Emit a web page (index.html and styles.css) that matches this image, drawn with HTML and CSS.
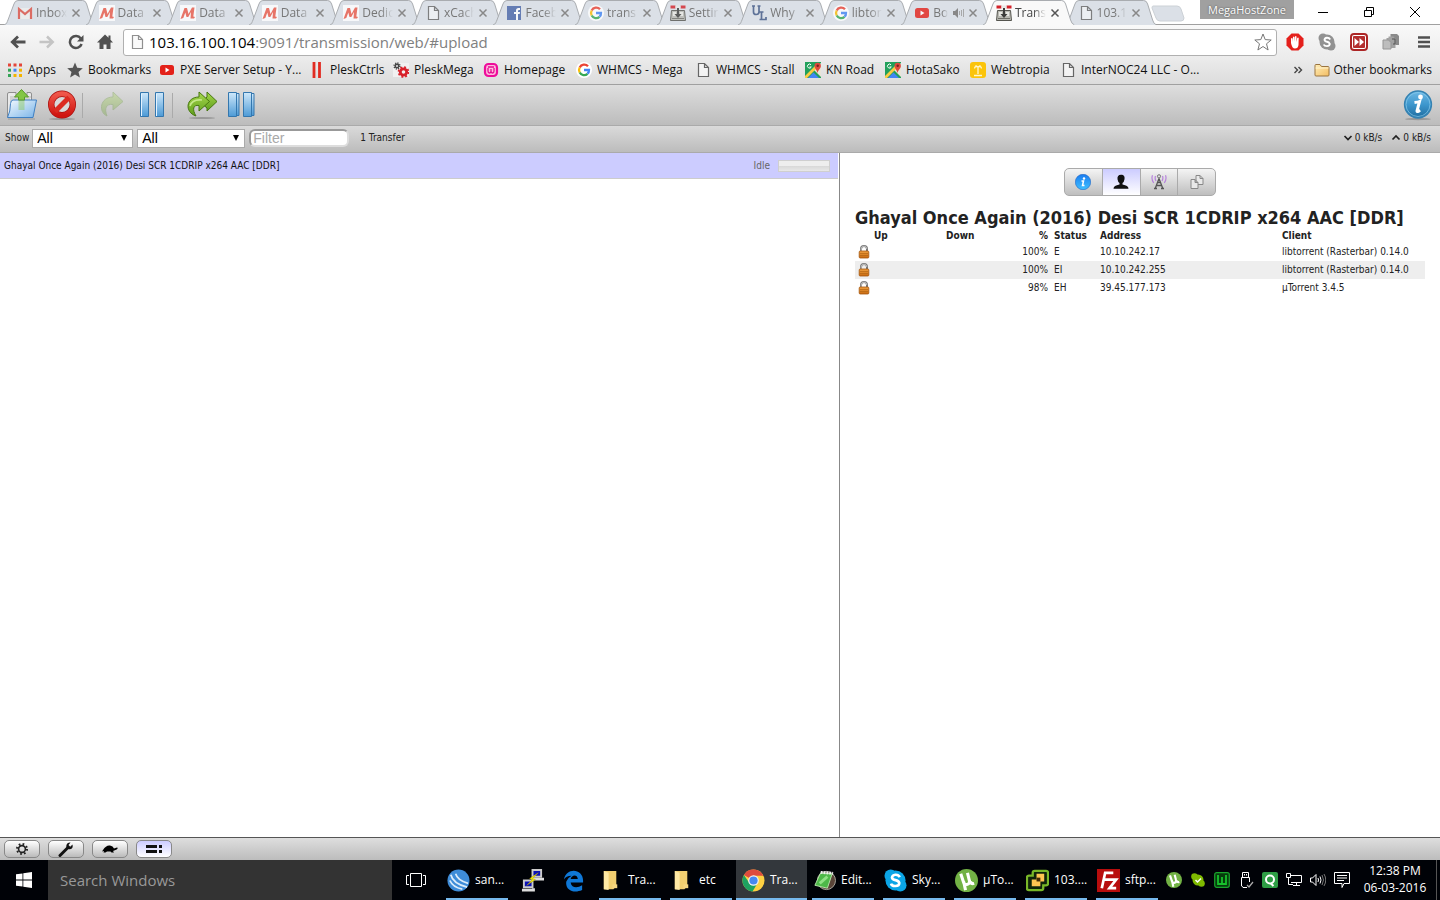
FILE: index.html
```html
<!DOCTYPE html>
<html lang="en">
<head>
<meta charset="utf-8">
<title>Transmission Web Interface</title>
<link rel="stylesheet" href="styles.css">
</head>
<body>
<svg class="sprite" aria-hidden="true">
  <defs>
    <linearGradient id="g-blue" x1="0" y1="0" x2="0" y2="1"><stop offset="0" stop-color="#cfe8fa"/><stop offset="1" stop-color="#4c9ad6"/></linearGradient>
    <linearGradient id="g-folder" x1="0" y1="0" x2="1" y2="1"><stop offset="0" stop-color="#f4faff"/><stop offset="1" stop-color="#7ab4e8"/></linearGradient>
    <linearGradient id="g-green" x1="0" y1="0" x2="0" y2="1"><stop offset="0" stop-color="#a6d84c"/><stop offset="1" stop-color="#5f9e1c"/></linearGradient>
    <linearGradient id="g-info" x1="0" y1="0" x2="0" y2="1"><stop offset="0" stop-color="#6db8e4"/><stop offset=".5" stop-color="#3d97cd"/><stop offset="1" stop-color="#1f6c9f"/></linearGradient>
    <linearGradient id="g-info2" x1="0" y1="0" x2="0" y2="1"><stop offset="0" stop-color="#1a7cf0"/><stop offset="1" stop-color="#3fc0ff"/></linearGradient>
    <linearGradient id="g-lock" x1="0" y1="0" x2="0" y2="1"><stop offset="0" stop-color="#f0a040"/><stop offset="1" stop-color="#c8690f"/></linearGradient>
    <linearGradient id="g-fold2" x1="0" y1="0" x2="1" y2="1"><stop offset="0" stop-color="#ffeeb8"/><stop offset="1" stop-color="#f3bd63"/></linearGradient>
    <linearGradient id="g-red" x1="0" y1="0" x2="0" y2="1"><stop offset="0" stop-color="#f0564a"/><stop offset="1" stop-color="#cf1510"/></linearGradient>
  </defs>
  <symbol id="tab-shape" viewBox="0 0 92 25" preserveAspectRatio="none"><path d="M0 25C3 24 3 22 4 20L10 4Q11 .5 14 .5H79Q82 .5 83 4L88 20Q89 24 92 25" vector-effect="non-scaling-stroke"/></symbol>
  <symbol id="gmail" viewBox="0 0 16 16"><path d="M1 3h14v11H1z" fill="#eee"/><path d="M2 14V4l6 5 6-5v10" fill="none" stroke="#dc5044" stroke-width="2.2"/></symbol>
  <symbol id="m-logo" viewBox="0 0 16 16"><path d="M0 0h16v16H0z" fill="#fff"/><path d="M.5 14L4.500 3H7l1.500 6L12 2.500h2.500L13.300 11.500l1.700.5-1 1.500h-3.500L11 7 8.300 12H6.500L5.300 7.500 3.300 13z" fill="#ea5a49"/></symbol>
  <symbol id="doc" viewBox="0 0 16 16"><path d="M3.500 1.500h6l4 4v9h-10zM9.500 1.500v4h4" fill="#fafafa" fill-opacity=".7" stroke="#666" stroke-width="1.200"/></symbol>
  <symbol id="doc-light" viewBox="0 0 16 16"><path d="M3.500 1.500h6l4 4v9h-10zM9.500 1.500v4h4" fill="#fafafa" stroke="#909090" stroke-width="1.200"/></symbol>
  <symbol id="fb" viewBox="0 0 16 16"><path d="M1 1h14v14H1z" fill="#4865a8"/><path d="M10 15V9h-2V7h2V5.500Q10 3 12.500 3H14v2h-1q-1 0-1 1v1h2l-.3 2H12v6" fill="#fff"/></symbol>
  <symbol id="google" viewBox="0 0 16 16"><circle cx="8" cy="8" r="8" fill="#fff"/><g fill="none" stroke-width="2.300"><path d="M12 4.300A5 5 0 0 0 3.700 5.500" stroke="#ea4335"/><path d="M3.700 5.500a5 5 0 0 0 0 5" stroke="#fbbc05"/><path d="M3.700 10.500a5 5 0 0 0 7.800 1.300" stroke="#34a853"/><path d="M11.500 11.800A5 5 0 0 0 13 8H8" stroke="#4285f4"/></g></symbol>
  <symbol id="transmission" viewBox="0 0 16 16"><path d="M1.500 5.500h13l1 10H.5z" fill="#b9b9b2" stroke="#55554f"/><path d="M.5.500h5v3h-5zM10.500.500h5v3h-5z" fill="#d3222a"/><path d="M5.500.500h5v3h-5z" fill="#e8e8e6"/><path d="M3 7h3v4H3zM10 7h3v4h-3z" fill="#e8e8e3"/><path d="M7 3h2v6h2.500L8 13 4.500 9H7z" fill="#3c3c3a"/><path d="M2 13.500h12" stroke="#6d6d66"/></symbol>
  <symbol id="ul" viewBox="0 0 16 16"><path d="M1 1h3M6.500 1h3M2.500 1v6q0 2.500 2.700 2.500T8 7V1M8.500 7h4M10.500 7v7.500H15V12M8.500 14.500H11" fill="none" stroke="#3e5684" stroke-width="1.700"/></symbol>
  <symbol id="youtube" viewBox="0 0 16 16"><rect x="1" y="3" width="14" height="10" rx="2.500" fill="#e32119"/><path d="M6.500 5.500v5L10.500 8z" fill="#fff"/></symbol>
  <symbol id="x" viewBox="0 0 10 10"><path d="M1.500 1.500l7 7M8.500 1.500l-7 7" stroke="currentColor" stroke-width="1.500"/></symbol>
  <symbol id="maps" viewBox="0 0 16 16"><path d="M0 0h16v16H0z" fill="#22a05b"/><path d="M16 1v14L8 7z" fill="#e9e4d8"/><path d="M0 14L13 1l2 2L2 16H0z" fill="#fbcb43"/><path d="M3 16l5.500-5.500L14 16z" fill="#4285f4"/><path d="M12.500 11C12 8 9.500 6.500 9.500 4a3.200 3.200 0 0 1 6.400 0c0 2.500-2.900 4-3.400 7z" fill="#dd4b3e"/><circle cx="12.700" cy="3.800" r="1.200" fill="#7a231d"/><path d="M6 2.800A2 2 0 1 0 6.300 5H4.500" fill="none" stroke="#fff"/></symbol>
  <symbol id="folder" viewBox="0 0 16 16"><path d="M1 13V3.500Q1 2.500 2 2.500h4l1.500 2H14q1 0 1 1V13q0 1-1 1H2q-1 0-1-1z" fill="url(#g-fold2)" stroke="#9a7440"/><path d="M1.500 6h13" stroke="#fff3cf"/></symbol>
  <symbol id="lock" viewBox="0 0 12 14"><path d="M3 7V4a3 3 0 0 1 6 0v3" fill="none" stroke="#777" stroke-width="2"/><path d="M3.200 6V4a2.800 2.800 0 0 1 5.600 0" fill="none" stroke="#ddd" stroke-width=".7"/><rect x="1.200" y="6" width="9.600" height="7" rx="1" fill="url(#g-lock)" stroke="#a5560e" stroke-width=".8"/><path d="M2 8.500h8M2 10.500h8" stroke="#ad610f" stroke-width=".6"/></symbol>
  <symbol id="win-folder" viewBox="0 0 24 24"><path d="M4 2h13v16l-3 3H4z" fill="#f2cf70"/><path d="M4 2l5 2v18l-5-1z" fill="#ffe9a4"/><path d="M13 16h5v4h-5z" fill="#f6d681"/></symbol>
  <symbol id="ut" viewBox="0 0 24 24"><circle cx="12" cy="12" r="12" fill="#72b245"/><path d="M6 5l3 9q1 3 4 2t2-4l-2-8M16 13q1 3 4 2M9 13l2 9" fill="none" stroke="#fff" stroke-width="3.200"/></symbol>
</svg>

<header class="browser">
  <div class="titlebar">
    <nav class="tabs" aria-label="Tabs">
      <div class="tab"><svg class="shape"><use href="#tab-shape"/></svg><svg class="fav"><use href="#gmail"/></svg><span class="title">Inbox</span><button class="close" aria-label="Close tab"><svg><use href="#x"/></svg></button></div>
      <div class="tab"><svg class="shape"><use href="#tab-shape"/></svg><svg class="fav"><use href="#m-logo"/></svg><span class="title">Data</span><button class="close" aria-label="Close tab"><svg><use href="#x"/></svg></button></div>
      <div class="tab"><svg class="shape"><use href="#tab-shape"/></svg><svg class="fav"><use href="#m-logo"/></svg><span class="title">Data</span><button class="close" aria-label="Close tab"><svg><use href="#x"/></svg></button></div>
      <div class="tab"><svg class="shape"><use href="#tab-shape"/></svg><svg class="fav"><use href="#m-logo"/></svg><span class="title">Data</span><button class="close" aria-label="Close tab"><svg><use href="#x"/></svg></button></div>
      <div class="tab"><svg class="shape"><use href="#tab-shape"/></svg><svg class="fav"><use href="#m-logo"/></svg><span class="title">Dedic</span><button class="close" aria-label="Close tab"><svg><use href="#x"/></svg></button></div>
      <div class="tab"><svg class="shape"><use href="#tab-shape"/></svg><svg class="fav"><use href="#doc"/></svg><span class="title">xCach</span><button class="close" aria-label="Close tab"><svg><use href="#x"/></svg></button></div>
      <div class="tab"><svg class="shape"><use href="#tab-shape"/></svg><svg class="fav"><use href="#fb"/></svg><span class="title">Faceb</span><button class="close" aria-label="Close tab"><svg><use href="#x"/></svg></button></div>
      <div class="tab"><svg class="shape"><use href="#tab-shape"/></svg><svg class="fav"><use href="#google"/></svg><span class="title">trans</span><button class="close" aria-label="Close tab"><svg><use href="#x"/></svg></button></div>
      <div class="tab"><svg class="shape"><use href="#tab-shape"/></svg><svg class="fav"><use href="#transmission"/></svg><span class="title">Settir</span><button class="close" aria-label="Close tab"><svg><use href="#x"/></svg></button></div>
      <div class="tab"><svg class="shape"><use href="#tab-shape"/></svg><svg class="fav"><use href="#ul"/></svg><span class="title">Why</span><button class="close" aria-label="Close tab"><svg><use href="#x"/></svg></button></div>
      <div class="tab"><svg class="shape"><use href="#tab-shape"/></svg><svg class="fav"><use href="#google"/></svg><span class="title">libtor</span><button class="close" aria-label="Close tab"><svg><use href="#x"/></svg></button></div>
      <div class="tab"><svg class="shape"><use href="#tab-shape"/></svg><svg class="fav"><use href="#youtube"/></svg><span class="title">Bo</span><svg class="speaker" viewBox="0 0 12 12"><path d="M1 4h2l3-3v10L3 8H1z" fill="#888"/><path d="M7.500 4v4M9.500 3v6M11.500 2v8" stroke="#999" stroke-width=".8"/></svg><button class="close" aria-label="Close tab"><svg><use href="#x"/></svg></button></div>
      <div class="tab active"><svg class="shape"><use href="#tab-shape"/></svg><svg class="fav"><use href="#transmission"/></svg><span class="title">Trans</span><button class="close" aria-label="Close tab"><svg><use href="#x"/></svg></button></div>
      <div class="tab"><svg class="shape"><use href="#tab-shape"/></svg><svg class="fav"><use href="#doc"/></svg><span class="title">103.1</span><button class="close" aria-label="Close tab"><svg><use href="#x"/></svg></button></div>
    </nav>
    <button class="new-tab" aria-label="New tab"><svg viewBox="0 0 34 17"><path d="M2 1h24q3 0 4 3l3 9q0 3-3 3H9q-3 0-4-3L1 3q0-2 1-2z" fill="#dbe0e7" stroke="#ccd1d6"/></svg></button>
    <div class="window-controls">
      <button class="profile">MegaHostZone</button>
      <button aria-label="Minimize"><svg viewBox="0 0 12 12"><path d="M1 6.500h10" stroke="#000"/></svg></button>
      <button aria-label="Restore"><svg viewBox="0 0 12 12"><path d="M1.500 4.500h7v6h-7zM3.500 4V1.500h7v7H9" fill="none" stroke="#000"/></svg></button>
      <button aria-label="Close window"><svg viewBox="0 0 12 12"><path d="M1 1l10 10M11 1L1 11" stroke="#000"/></svg></button>
    </div>
  </div>

  <div class="navbar">
    <div class="nav-buttons">
      <button aria-label="Back"><svg viewBox="0 0 16 16"><path d="M15.500 8H3M8 2.500L2.300 8 8 13.500" fill="none" stroke="#505050" stroke-width="2.800"/></svg></button>
      <button aria-label="Forward"><svg viewBox="0 0 16 16"><path d="M.5 8H13M8 2.500L13.700 8 8 13.500" fill="none" stroke="#c4c4c4" stroke-width="2.500"/></svg></button>
      <button aria-label="Reload"><svg viewBox="0 0 16 16"><path d="M12.800 4.500A6 6 0 1 0 13.600 10" fill="none" stroke="#505050" stroke-width="2.500"/><path d="M15.500 1v6.500H9z" fill="#505050"/></svg></button>
      <button aria-label="Home"><svg viewBox="0 0 16 16"><path d="M8 .5L0 8.500h2.500V15h4v-4.500h3V15h4V8.500H16l-2.500-2.700V1.500h-2v2.300z" fill="#505050"/></svg></button>
    </div>
    <div class="omnibox">
      <svg><use href="#doc-light"/></svg>
      <span class="url"><span class="host">103.16.100.104</span>:9091/transmission/web/#upload</span>
      <button aria-label="Bookmark this page"><svg viewBox="0 0 18 18"><path d="M9 1l2.200 5.600 6 .4-4.700 3.800L14.100 17 9 13.500 3.900 17l1.600-6.200L.8 7l6-.4z" fill="#fff" stroke="#777"/></svg></button>
    </div>
    <div class="extensions">
      <button aria-label="AdBlock"><svg viewBox="0 0 18 18"><path d="M5.500.5h7l5 5v7l-5 5h-7l-5-5v-7z" fill="#e4201c"/><path d="M5 10V5.500q.8-1 1.500 0V9l.5-5q.8-1 1.500 0v4.500L9 3.500q.8-1 1.500 0V9l.7-4q.9-1 1.500 0l-.2 7q-.5 3.500-3.500 3.500T5 10z" fill="#fff"/></svg></button>
      <button aria-label="Skype"><svg viewBox="0 0 18 18"><circle cx="9" cy="9" r="7.500" fill="#929292"/><circle cx="5" cy="5" r="4.500" fill="#929292"/><circle cx="13" cy="13" r="4.500" fill="#929292"/><path d="M12.200 6.500Q11 4.500 8.800 4.700T6.500 7Q7 8.500 9 8.800t2.800 2q0 2.200-2.700 2.300T5.700 11.500" fill="none" stroke="#fff" stroke-width="1.900"/></svg></button>
      <button aria-label="Fast forward"><svg viewBox="0 0 18 18"><rect x="1" y="1" width="16" height="16" rx="3" fill="#fff" stroke="#ac2525" stroke-width="2"/><rect x="3" y="3" width="12" height="12" rx="1" fill="#b42e2e"/><path d="M4.500 5v8l4.500-4zM9.500 5v8l4.500-4z" fill="#fff"/></svg></button>
      <button aria-label="Pages"><svg viewBox="0 0 18 18"><path d="M8.500 3V1h6.500l2 2v9h-4v2H9z" fill="#8a8a8a"/><path d="M4.500 5h2V3.500h5L13.500 6v9h-9z" fill="#a2a2a2"/><path d="M10 6h3v5h-2" fill="none" stroke="#555"/><path d="M1 7h5.500L9 9.500V16H1z" fill="#bdbdbd" stroke="#959595"/></svg></button>
      <button aria-label="Menu"><svg viewBox="0 0 18 18"><path d="M3 4.500h12M3 9h12M3 13.500h12" stroke="#505050" stroke-width="2.700"/></svg></button>
    </div>
  </div>

  <nav class="bookmarks" aria-label="Bookmarks">
    <div class="bookmark-list">
      <a href="#apps"><svg viewBox="0 0 16 16"><path d="M1 3h14" stroke="#e44538" stroke-width="3" stroke-dasharray="3 2.500"/><path d="M1 8.200h3" stroke="#35a456" stroke-width="3"/><path d="M6.500 8.200h3" stroke="#4285f4" stroke-width="3"/><path d="M12 8.200h3" stroke="#f4b400" stroke-width="3"/><path d="M1 13.500h3" stroke="#35a456" stroke-width="3"/><path d="M6.500 13.500H15" stroke="#f4b400" stroke-width="3" stroke-dasharray="3 2.500"/></svg>Apps</a>
      <a href="#bookmarks"><svg viewBox="0 0 16 16"><path d="M8 .5l2.200 5.300 5.600.5-4.300 3.700 1.400 5.600L8 12.500l-4.900 3.100L4.500 10 .2 6.300l5.600-.5z" fill="#555"/></svg>Bookmarks</a>
      <a href="#pxe"><svg><use href="#youtube"/></svg>PXE Server Setup - Y...</a>
      <a href="#ctrls"><svg viewBox="0 0 16 16"><path d="M5 0v16M10.500 0v16" stroke="#e12c22" stroke-width="2.800"/></svg>PleskCtrls</a>
      <a href="#mega"><svg viewBox="0 0 16 16"><path d="M0 1h16v14H0z" fill="#f1f1f1"/><circle cx="4" cy="4" r="1.700" fill="none" stroke="#444" stroke-width="1.500"/><circle cx="4" cy="4" r="2.900" fill="none" stroke="#444" stroke-width="1.500" stroke-dasharray="1.200 1.077"/><circle cx="10.500" cy="10" r="3.200" fill="none" stroke="#d8202a" stroke-width="2.800"/><circle cx="10.500" cy="10" r="5" fill="none" stroke="#d8202a" stroke-width="1.600" stroke-dasharray="2 1.927"/></svg>PleskMega</a>
      <a href="#home"><svg viewBox="0 0 16 16"><rect x="2" y="2" width="12" height="12" rx="3.500" fill="#fbd" stroke="#ee0d9b" stroke-width="2.200"/><path d="M5 6v3q0 2 1.500 2T8 9V7M8 9q0 2 1.500 2T11 9V6M5 5h6" fill="none" stroke="#e50d94" stroke-width="1.300"/></svg>Homepage</a>
      <a href="#whmcs-mega"><svg><use href="#google"/></svg>WHMCS - Mega</a>
      <a href="#whmcs-stall"><svg><use href="#doc"/></svg>WHMCS - Stall</a>
      <a href="#kn"><svg><use href="#maps"/></svg>KN Road</a>
      <a href="#hota"><svg><use href="#maps"/></svg>HotaSako</a>
      <a href="#webtropia"><svg viewBox="0 0 16 16"><rect width="16" height="16" rx="3" fill="#fbc40a"/><path d="M8 5v7M4.500 6.500Q5 3.500 8 5q3-1.500 3.500 1.500M5.500 3.500L8 5l2.500-1.500M4 13.500h8" fill="none" stroke="#fff7cf" stroke-width="1.300"/></svg>Webtropia</a>
      <a href="#internoc"><svg><use href="#doc"/></svg>InterNOC24 LLC - O...</a>
    </div>
    <button class="more" aria-label="More bookmarks"><svg viewBox="0 0 10 10"><path d="M1.500 2l3 3-3 3M5.500 2l3 3-3 3" fill="none" stroke="#444" stroke-width="1.400"/></svg></button>
    <a class="other" href="#other"><svg><use href="#folder"/></svg>Other bookmarks</a>
  </nav>
</header>

<div class="app">
  <div class="toolbar">
    <button aria-label="Open torrent"><svg viewBox="0 0 32 32"><path d="M1.500 5q0-1.500 1.500-1.500h7V7h11V3.500h3q1.500 0 1.500 1.500v23h-24z" fill="#e9e9e9" stroke="#8f8f8f"/><path d="M4 8h6M4 10h20M4 12h20M21 8h4" stroke="#bbb"/><path d="M7 11h23.500L27 28.500H1.500q3-6 3-14Q5 11 7 11z" fill="url(#g-folder)" stroke="#3e7fc2"/><path d="M12.500 21V8H8.500L15.500.5 22.500 8H18.500v13z" fill="#83c644" fill-opacity=".4"/><path d="M12.500 11V8H8.500L15.500.5 22.500 8H18.500v3z" fill="#83c644" stroke="#5a9a2c"/><path d="M2 30h27" stroke="#999"/></svg></button>
    <button aria-label="Remove torrents"><svg viewBox="0 0 32 32"><ellipse cx="16" cy="30" rx="13" ry="1" fill="#999"/><circle cx="16" cy="15.500" r="10.800" fill="#d9d9d9" stroke="#a70e0c" stroke-width="6.400"/><circle cx="16" cy="15.500" r="10.800" fill="none" stroke="url(#g-red)" stroke-width="5"/><path d="M9 22.500l14-14" stroke="#dc2a20" stroke-width="5"/></svg></button>
    <span class="separator"></span>
    <button class="dim" aria-label="Start torrents"><svg viewBox="0 0 32 32"><path d="M11 27C2 23 4 8 17 8V3l10 9.500L17 21v-5.500c-7-1-9 4-6 11.500z" fill="url(#g-green)" stroke="#5a8f22"/></svg></button>
    <button aria-label="Pause torrents"><svg viewBox="0 0 32 32"><path d="M4.500 3.500h8v24h-8zM19.500 3.500h8v24h-8z" fill="url(#g-blue)" stroke="#3477ae"/><path d="M5.500 5v22M20.500 5v22" stroke="#e4f3ff"/></svg></button>
    <span class="separator"></span>
    <button aria-label="Start all"><svg viewBox="0 0 32 32"><ellipse cx="16" cy="29" rx="13" ry="1" fill="#999"/><path d="M15 14l6 5v3l10-9.500L21 3v5z" fill="url(#g-green)" stroke="#47770f"/><path d="M10 27C-2 23 0 8 13 8V3l10.500 9.500L13 22v-5.500c-6-1-7 4-3 10.500z" fill="url(#g-green)" stroke="#47770f"/><path d="M4 17q2-7 12-6" fill="none" stroke="#c6e98b" stroke-width="1.500"/></svg></button>
    <button aria-label="Pause all"><svg viewBox="0 0 32 32"><path d="M7 4.500h6v22H7zM22 4.500h6v22h-6z" fill="url(#g-blue)" stroke="#3477ae"/><path d="M2.500 3.500h8v24h-8zM17.500 3.500h8v24h-8z" fill="url(#g-blue)" stroke="#3477ae"/></svg></button>
    <button class="inspector-toggle" aria-label="Toggle inspector"><svg viewBox="0 0 32 32"><ellipse cx="16" cy="30" rx="13" ry="1.200" fill="#999"/><circle cx="16" cy="15.500" r="13.400" fill="url(#g-info)" stroke="#3582b2" stroke-width="1.500"/><circle cx="16" cy="15.500" r="12" fill="none" stroke="#8acbed" stroke-width=".7"/><circle cx="18.500" cy="8" r="2.400" fill="#fff"/><path d="M12.500 13.500q4-.5 5-1L15 22q0 1.500 3-1" fill="none" stroke="#fff" stroke-width="3"/></svg></button>
  </div>

  <div class="statusbar">
    <label for="state">Show</label>
    <span class="select"><select id="state"><option>All</option></select></span>
    <span class="select wide"><select aria-label="Tracker"><option>All</option></select></span>
    <input class="filter" type="text" placeholder="Filter" aria-label="Filter">
    <span class="count">1 Transfer</span>
    <span class="speeds"><svg viewBox="0 0 10 10"><path d="M1.500 3L5 6.500 8.500 3" fill="none" stroke="#222" stroke-width="1.700"/></svg>0 kB/s</span>
    <span class="speeds"><svg viewBox="0 0 10 10"><path d="M1.500 6.500L5 3l3.500 3.500" fill="none" stroke="#222" stroke-width="1.700"/></svg>0 kB/s</span>
  </div>

  <main class="content">
    <section class="torrents" aria-label="Torrents">
      <div class="torrent"><span class="name">Ghayal Once Again (2016) Desi SCR 1CDRIP x264 AAC [DDR]</span><span class="state">Idle</span><span class="progress"></span></div>
    </section>
    <aside class="inspector">
      <div class="inspector-tabs">
        <button aria-label="Info"><svg viewBox="0 0 16 16"><circle cx="8" cy="8" r="7.700" fill="url(#g-info2)" stroke="#2166c5" stroke-width=".6"/><circle cx="9" cy="4.500" r="1.200" fill="#fff"/><path d="M6.500 7h2L7.500 11.500H9.500" fill="none" stroke="#fff" stroke-width="1.500"/></svg></button>
        <button class="selected" aria-label="Peers"><svg viewBox="0 0 16 16"><path d="M8 .8c3 0 4 2 3.500 4.500Q11 8.500 9.500 9v1.500q6 1 6 4.300H.5q0-3.300 6-4.300V9Q5 8.500 4.500 5.300 4 .8 8 .8z" fill="#111"/></svg></button>
        <button aria-label="Trackers"><svg viewBox="0 0 16 16"><circle cx="8" cy="2.300" r="1.600" fill="#ddd" stroke="#777"/><path d="M8 4.500L4 15M8 4.500L12 15M6.500 8.500h3M5.500 11.500h5M3 14.500h3M10 14.500h3" fill="none" stroke="#555" stroke-width="1.300"/><path d="M4.500 2q-1 2.500.5 5M1.500 1.200Q0 5 2.700 9M11.500 2q1 2.500-.5 5M14.500 1.200Q16 5 13.300 9" fill="none" stroke="#b783dc" stroke-width="1.200"/></svg></button>
        <button aria-label="Files"><svg viewBox="0 0 16 16"><path d="M7 1.500h4l3 3v6H7zM11 1.500v3h3" fill="#e9e9e9" stroke="#888"/><path d="M2 5.500h4l3 3v6H2zM6 5.500v3h3" fill="#e9e9e9" stroke="#888"/></svg></button>
      </div>
      <h1>Ghayal Once Again (2016) Desi SCR 1CDRIP x264 AAC [DDR]</h1>
      <table class="peers">
        <colgroup><col class="c-lock"><col class="c-rate"><col class="c-rate"><col class="c-pct"><col class="c-status"><col class="c-address"><col></colgroup>
        <thead><tr><th></th><th>Up</th><th>Down</th><th class="num">%</th><th>Status</th><th>Address</th><th>Client</th></tr></thead>
        <tbody>
          <tr><td><svg><use href="#lock"/></svg></td><td></td><td></td><td class="num">100%</td><td>E</td><td>10.10.242.17</td><td>libtorrent (Rasterbar) 0.14.0</td></tr>
          <tr><td><svg><use href="#lock"/></svg></td><td></td><td></td><td class="num">100%</td><td>EI</td><td>10.10.242.255</td><td>libtorrent (Rasterbar) 0.14.0</td></tr>
          <tr><td><svg><use href="#lock"/></svg></td><td></td><td></td><td class="num">98%</td><td>EH</td><td>39.45.177.173</td><td>µTorrent 3.4.5</td></tr>
        </tbody>
      </table>
    </aside>
  </main>

  <footer class="footer">
    <button aria-label="Settings"><svg viewBox="0 0 20 16"><circle cx="10" cy="8" r="3.400" fill="none" stroke="#222" stroke-width="1.600"/><circle cx="10" cy="8" r="5" fill="none" stroke="#222" stroke-width="2" stroke-dasharray="1.700 2.227"/></svg></button>
    <button aria-label="Preferences"><svg viewBox="0 0 20 16"><path d="M4 14.500l8-8" stroke="#111" stroke-width="3" stroke-linecap="round"/><path d="M16.500 3.500q1 4-2.500 4.800-4 .5-3.700-3.500Q11 1.300 14.500 1.500l-2 2.500 1.700 1.800z" fill="#111"/></svg></button>
    <button aria-label="Turtle mode"><svg viewBox="0 0 20 16"><path d="M3 9Q6 4 10 4.500q3 .5 4 3l3-1q1.500.5-.3 2L13 10l1 1.500h-2.500l-1-1H7L5.500 11.500H3.500l.5-1.500-2 .5z" fill="#000"/></svg></button>
    <button class="selected" aria-label="Compact view"><svg viewBox="0 0 20 16"><path d="M2 5.500h11M2 10.500h11M15 5.500h3M15 10.500h3" stroke="#111" stroke-width="3"/></svg></button>
  </footer>
</div>

<div class="taskbar">
  <button class="start" aria-label="Start"><svg viewBox="0 0 16 16"><path d="M0 2.300l6.500-.9v6.200H0zM7.300 1.200L16 0v7.600H7.300zM0 8.400h6.500v6.200L0 13.700zM7.300 8.400H16V16l-8.700-1.200z" fill="#fff"/></svg></button>
  <input class="search" type="text" placeholder="Search Windows" aria-label="Search Windows">
  <button class="task-view" aria-label="Task view"><svg viewBox="0 0 20 14"><path d="M4.500.500h11v13h-11zM3 2.500H.5v9H3M17 2.500h2.500v9H17" fill="none" stroke="#fff"/></svg></button>
  <div class="tasks">
    <button class="task"><svg viewBox="0 0 24 24"><circle cx="12" cy="12" r="11.500" fill="#3e8cd8"/><path d="M4 6q2 9 17 13M9 5q2 7 13 10M3 12q3 7 13 9" fill="none" stroke="#dcecfa" stroke-width="1.800"/></svg><span>san...</span></button>
    <button class="task small" aria-label="PuTTY"><svg viewBox="0 0 24 24"><path d="M12 1h9v7h-9zM3 12h9v7H3z" fill="#0b12b8" stroke="#ccc" stroke-width="2"/><path d="M11 10.500h12V9M1 22h12v-2" fill="none" stroke="#ddd" stroke-width="3"/><path d="M18 4l-9 6 3 1-6 6 9-6-3-1z" fill="#fff300" stroke="#a99c00" stroke-width=".5"/></svg></button>
    <button class="task small" aria-label="Edge"><svg viewBox="0 0 24 24"><path d="M2 11C4-2 22-1 22 12v2H9c1 6 7 6 12 3v5C12 26 3 22 4.500 13Q6 9 10 7 4 7 2 11zM9 10.500h7.500C16 5 10 6 9 10.500z" fill="#0f78d7"/></svg></button>
    <button class="task"><svg><use href="#win-folder"/></svg><span>Tra...</span></button>
    <button class="task"><svg><use href="#win-folder"/></svg><span>etc</span></button>
    <button class="task current"><svg viewBox="0 0 24 24"><circle cx="12" cy="12" r="11.500" fill="#fdd042"/><path d="M12 12L2 6.200A11.500 11.500 0 0 1 22.300 7H12z" fill="#dd4b3e"/><path d="M2 6.200A11.500 11.500 0 0 0 11 23.500L16.300 14.500 12 17 7.700 14.500z" fill="#1da261"/><circle cx="12" cy="12" r="5.500" fill="#f5f5f5"/><circle cx="12" cy="12" r="4.300" fill="#4688f1"/></svg><span>Tra...</span></button>
    <button class="task"><svg viewBox="0 0 24 24"><circle cx="14" cy="12" r="9.500" fill="#5a4438" stroke="#a9a59d"/><path d="M8 4l12 1-5 15-13-3z" fill="#4db848" stroke="#b3e2a6"/><path d="M8 3.500l13 1" stroke="#eee" stroke-width="3" stroke-dasharray="2 1"/><path d="M7 15L15 8" stroke="#8fe184" stroke-width="3"/></svg><span>Edit...</span></button>
    <button class="task"><svg viewBox="0 0 24 24"><circle cx="12" cy="12" r="10.500" fill="#0ba5e6"/><circle cx="7" cy="7" r="6.500" fill="#0ba5e6"/><circle cx="17" cy="17" r="6.500" fill="#0ba5e6"/><path d="M16.500 8.500Q15 5.700 11.800 6T8.300 9q.5 2 3.700 2.600t4 3q0 3-4 3.200T7.300 15.300" fill="none" stroke="#fff" stroke-width="2.700"/></svg><span>Sky...</span></button>
    <button class="task"><svg><use href="#ut"/></svg><span>µTo...</span></button>
    <button class="task"><svg viewBox="0 0 24 24"><path d="M9 2h12q2 0 2 2v11q0 2-2 2h-3v3q0 2-2 2H3q-2 0-2-2V9q0-2 2-2h4V4q0-2 2-2z" fill="#10240a" stroke="#79b829" stroke-width="2.400"/><path d="M11 5h8v8h-4v5H6v-7h5z" fill="#ffc552"/><path d="M11 9h4v4h-4z" fill="#432b05"/></svg><span>103....</span></button>
    <button class="task"><svg viewBox="0 0 24 24"><path d="M0 0h24v24H0z" fill="#b80d0d"/><path d="M5 20L8.500 4H17M7 11h7M13 11h7l-7 9h7" fill="none" stroke="#fff" stroke-width="2.800"/></svg><span>sftp...</span></button>
  </div>
  <div class="tray">
    <button aria-label="µTorrent"><svg><use href="#ut"/></svg></button>
    <button aria-label="Skype status"><svg viewBox="0 0 16 16"><circle cx="8" cy="8" r="5.500" fill="#7fba00"/><circle cx="4.500" cy="4.500" r="3.300" fill="#7fba00"/><circle cx="11.500" cy="11.500" r="3.300" fill="#7fba00"/><path d="M5.500 8l2 2 3.500-3.500" fill="none" stroke="#fff" stroke-width="1.500"/></svg></button>
    <button aria-label="Webroot"><svg viewBox="0 0 16 16"><rect x=".7" y=".7" width="14.600" height="14.600" rx="2" fill="#063b0c" stroke="#19a52c" stroke-width="1.200"/><path d="M4 3v9h4V5v7h4V3" fill="none" stroke="#17c22c" stroke-width="1.800"/></svg></button>
    <button aria-label="USB device"><svg viewBox="0 0 16 16"><path d="M4.500 5V.5h6V5M3.500 14V5.500h8V10M3.500 13.500L5 15.500h4" fill="none" stroke="#fff"/><path d="M6.500 2v1.500M8.500 2v1.500" stroke="#fff"/><path d="M9 13l2 2 4-5" fill="none" stroke="#aaa" stroke-width="1.300"/></svg></button>
    <button aria-label="Q"><svg viewBox="0 0 16 16"><rect width="16" height="16" rx="2" fill="#2e9e45"/><circle cx="8" cy="7.500" r="4" fill="none" stroke="#fff" stroke-width="2"/><path d="M8.500 11l3 3" stroke="#fff" stroke-width="2"/></svg></button>
    <button aria-label="Network"><svg viewBox="0 0 16 16"><path d="M5 3.500h10.500v7H5M7 13.500h7M10.500 11v2.500M.5 1.500h4v4h-4zM2.500 6v6.500H7" fill="none" stroke="#fff"/></svg></button>
    <button aria-label="Volume"><svg viewBox="0 0 16 16"><path d="M.5 6h2l3.500-3.500v11L2.500 10h-2z" fill="none" stroke="#fff"/><path d="M8 6q1 2 0 4M10 4.500q2 3.500 0 7" fill="none" stroke="#fff"/><path d="M12 3q3 5 0 10M14 2q3.500 6 0 12" fill="none" stroke="#777"/></svg></button>
    <button aria-label="Notifications"><svg viewBox="0 0 16 16"><path d="M.5.500h15v11H10L8 15.500V11.500H.5zM3 3.500h10M3 6h10M3 8.500h7" fill="none" stroke="#fff"/></svg></button>
  </div>
  <div class="clock"><time>12:38 PM</time><time>06-03-2016</time></div>
  <button class="show-desktop" aria-label="Show desktop"></button>
</div>
</body>
</html>
```
FILE: styles.css
```css
* { box-sizing: border-box; }

body {
  margin: 0;
  height: 100vh;
  display: flex;
  flex-direction: column;
  overflow: hidden;
  background: #fff;
  font: 12px/16px "Open Sans", "Noto Sans", sans-serif;
  color: #222;
}

button {
  display: flex;
  align-items: center;
  justify-content: center;
  margin: 0;
  padding: 0;
  border: 0;
  background: none;
  font: inherit;
  color: inherit;
}

svg { display: block; flex: none; width: 16px; height: 16px; }
.sprite { position: absolute; width: 0; height: 0; }

/* Browser tabs */
.titlebar { display: flex; height: 25px; padding-left: 4px; border-bottom: 1px solid #a0a0a0; }
.tabs { display: flex; flex: 1; min-width: 0; }
.tab {
  position: relative;
  display: flex;
  flex: 1;
  align-items: center;
  height: 25px;
  min-width: 0;
  padding: 0 5px 0 13px;
  color: #777;
}
.tab .shape { position: absolute; top: 0; left: 0; width: calc(100% + 10px); height: 25px; fill: #dbe0e7; stroke: #a9acb0; }
.tab .fav, .tab .title, .tab .close, .tab .speaker { position: relative; }
.tab .fav { opacity: .8; }
.tab .title {
  flex: 1;
  min-width: 0;
  margin: 0 4px 0 3px;
  overflow: hidden;
  white-space: nowrap;
  mask-image: linear-gradient(90deg, #000 60%, transparent);
}
.tab .speaker { width: 12px; height: 12px; margin-right: 4px; }
.tab .close, .tab .close svg { width: 10px; height: 10px; color: #888; }
.tab.active { z-index: 1; color: #444; }
.tab.active .shape { fill: #f9f9f9; }
.tab.active .fav { opacity: 1; }
.tab.active .close svg { color: #555; }
.new-tab { align-items: flex-start; width: 40px; padding: 5px 0 0 4px; }
.new-tab svg { width: 34px; height: 17px; }

.window-controls { display: flex; height: 24px; padding: 0 2px 0 14px; }
.window-controls button { width: 46px; }
.window-controls svg { width: 12px; height: 12px; }
.window-controls .profile {
  width: 94px;
  height: 19px;
  margin-right: 6px;
  background: #a0a0a0;
  font-size: 11px;
  color: #fff;
  text-shadow: 0 0 2px #444;
}

/* Address bar and bookmarks */
.navbar { display: flex; align-items: center; height: 34px; padding-left: 6px; background: linear-gradient(#f9f9f9, #ebebeb); }
.nav-buttons { display: flex; width: 117px; }
.nav-buttons button { width: 29px; padding-right: 6px; }
.omnibox {
  display: flex;
  flex: 1;
  align-items: center;
  height: 27px;
  padding: 0 4px 0 5px;
  border: 1px solid #b0b0b0;
  border-radius: 3px;
  background: #fff;
}
.url { flex: 1; padding-left: 4px; font-size: 15px; line-height: 20px; color: #808080; }
.host { color: #000; }
.omnibox button svg { width: 18px; height: 18px; }
.extensions { display: flex; padding: 0 0 0 2px; }
.extensions button { width: 32px; }
.extensions button:last-child { margin-left: 1px; }
.extensions svg { width: 18px; height: 18px; }

.bookmarks { display: flex; align-items: center; height: 26px; padding: 0 8px 4px 7px; border-bottom: 1px solid #a0a0a0; background: linear-gradient(#ebebeb, #dcdcdc); color: #111; white-space: nowrap; }
.bookmarks a { display: flex; align-items: center; gap: 5px; color: inherit; text-decoration: none; }
.bookmarks .other { gap: 3px; }
.bookmark-list {
  display: grid;
  flex: 1;
  grid-template-columns: 60px 92px 150px 84px 90px 93px 119px 110px 80px 85px 90px 1fr;
}
.more { width: 20px; margin-right: 6px; }
.more svg { width: 10px; height: 10px; }

/* Torrent client */
.app { display: flex; flex: 1; flex-direction: column; min-height: 0; font: 10px/14px "DejaVu Sans Condensed", "DejaVu Sans", sans-serif; }
.toolbar { display: flex; align-items: center; height: 41px; padding: 0 6px; border-bottom: 1px solid #aaa; background: linear-gradient(#dedede, #bcbcbc); }
.toolbar button, .toolbar svg { width: 32px; height: 32px; }
.toolbar button { margin-right: 8px; }
.toolbar .separator { width: 1px; height: 25px; margin: 0 13px 0 -4px; border-left: 1px solid #aaa; }
.toolbar .dim { opacity: .3; }
.toolbar .inspector-toggle { margin: 0 0 0 auto; }

.statusbar { display: flex; align-items: center; height: 27px; padding: 0 9px 2px 5px; border-bottom: 1px solid #aaa; background: linear-gradient(#dadada, #bcbcbc); }
.select { position: relative; display: flex; width: 101px; margin-left: 3px; }
.select.wide { width: 108px; margin-left: 4px; }
.select::after { content: ""; position: absolute; right: 6px; top: 6px; border: 3px solid transparent; border-top: 6px solid #000; border-bottom: 0; pointer-events: none; }
select { width: 100%; height: 19px; padding: 0 4px 1px; border: 1px solid #aaa; border-radius: 0; background: #fff; appearance: none; font: 14px/16px "Liberation Sans", sans-serif; color: #000; }
.filter { width: 100px; height: 18px; margin-left: 4px; padding: 0 2px; border: 2px solid #ddd; border-top-color: #999; border-left-color: #999; border-radius: 6px; font: 14px/14px "Liberation Sans", sans-serif; }
.filter::placeholder { color: #a9a9a9; }
.count { flex: 1; padding-left: 11px; }
.speeds { display: flex; align-items: center; gap: 2px; margin-left: 9px; }
.speeds svg { width: 10px; height: 10px; }

.content { display: flex; flex: 1; min-height: 0; }
.torrents { flex: 1; padding-right: 1px; }
.torrent { display: flex; align-items: center; height: 26px; padding: 0 8px 0 4px; border-bottom: 1px solid #ccc; background: #ccf; color: #111; }
.torrent .name { flex: 1; }
.torrent .state { color: #666; }
.progress { width: 52px; height: 12px; margin-left: 8px; border: 1px solid #cfcfcf; background: linear-gradient(#eee 50%, #d8d8d8 50%, #e8e8e8); }

.inspector { width: 601px; padding: 15px; border-left: 1px solid #888; }
.inspector-tabs { display: flex; width: 152px; height: 28px; margin: 0 auto; border: 1px solid #aaa; border-radius: 5px; background: linear-gradient(#f4f4f4, #bebebe); overflow: hidden; }
.inspector-tabs button { flex: 1; }
.inspector-tabs button + button { border-left: 1px solid #aaa; }
.inspector-tabs .selected { background: linear-gradient(#ccf, #fff); }
.inspector h1 { margin: 11px 0 0; font-size: 18px; line-height: 22px; white-space: nowrap; color: #222; }

.peers { width: 100%; table-layout: fixed; border-collapse: collapse; }
.peers th, .peers td { height: 18px; padding: 0; text-align: left; }
.peers th { height: 14px; line-height: 14px; }
.peers .num { padding-right: 6px; text-align: right; }
.peers tbody tr:nth-child(even) { background: #eee; }
.peers svg { width: 12px; height: 14px; margin-left: 3px; }
.c-lock { width: 19px; }
.c-rate { width: 72px; }
.c-pct { width: 36px; }
.c-status { width: 46px; }
.c-address { width: 182px; }

.footer { display: flex; align-items: center; gap: 8px; height: 23px; padding: 0 4px; border-top: 1px solid #555; background: linear-gradient(#dedede, #bcbcbc); }
.footer button { width: 36px; height: 18px; border: 1px solid #888; border-radius: 5px; background: linear-gradient(#fff, #bbb); }
.footer .selected { background: linear-gradient(#ccf, #fff); }
.footer svg { width: 20px; height: 16px; }

/* Windows taskbar */
.taskbar { display: flex; height: 40px; background: #000207; color: #fff; }
.start { width: 48px; }
.search { width: 344px; padding: 0 12px; border: 0; background: #333; font: 15px/20px "Open Sans", sans-serif; }
.search::placeholder { color: #999; }
.task-view { width: 48px; }
.task-view svg { width: 20px; height: 14px; }
.tasks { display: flex; flex: 1; padding-left: 1px; }
.task { position: relative; flex: none; justify-content: flex-start; gap: 5px; width: 71px; padding-left: 6px; }
.task::after { content: ""; position: absolute; right: 4px; bottom: 0; left: 5px; height: 2px; background: #76b9ed; }
.task svg { width: 23px; height: 23px; }
.task.small { justify-content: center; width: 41px; padding: 0; }
.task.small::after { display: none; }
.task.current { background: #33373c; }
.task.current::after { right: 0; left: 0; }
.tray { display: flex; }
.tray button { width: 24px; }
.clock { display: flex; flex-direction: column; justify-content: center; width: 82px; line-height: 17px; padding-bottom: 2px; text-align: center; }
.show-desktop { width: 4px; border-left: 1px solid #555; }
```
